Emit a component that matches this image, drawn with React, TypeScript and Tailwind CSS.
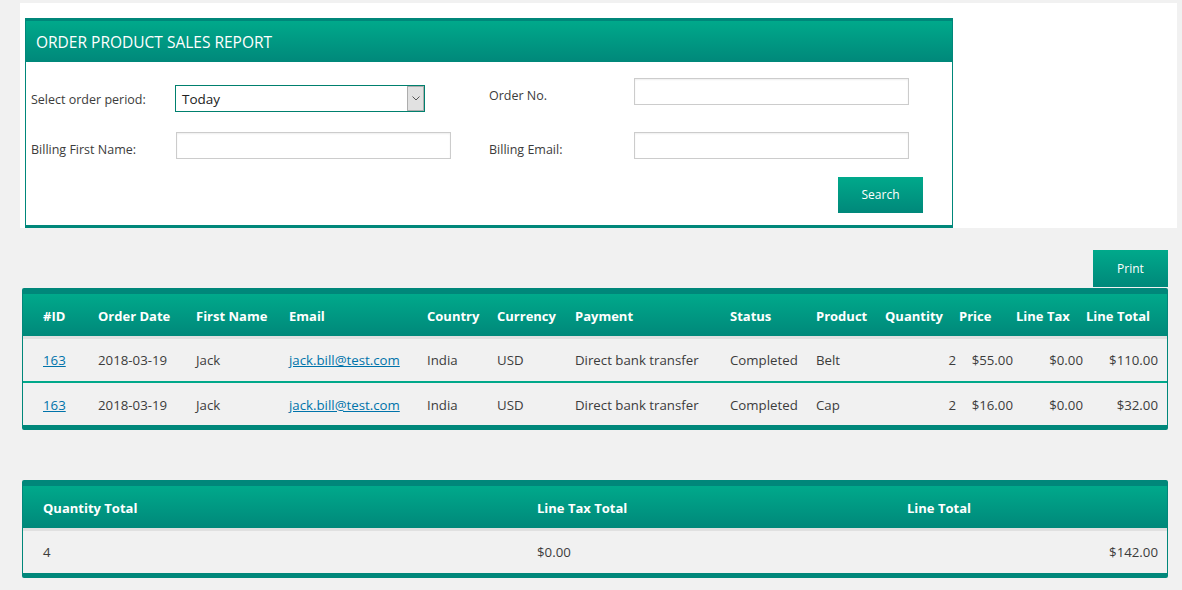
const rows = [
  { id: "163", date: "2018-03-19", name: "Jack", email: "jack.bill@test.com", country: "India", currency: "USD", payment: "Direct bank transfer", status: "Completed", product: "Belt", qty: "2", price: "$55.00", tax: "$0.00", total: "$110.00" },
  { id: "163", date: "2018-03-19", name: "Jack", email: "jack.bill@test.com", country: "India", currency: "USD", payment: "Direct bank transfer", status: "Completed", product: "Cap", qty: "2", price: "$16.00", tax: "$0.00", total: "$32.00" },
];

const cols = [
  { label: "#ID", w: "w-[75px] pl-[20px]" },
  { label: "Order Date", w: "w-[98px]" },
  { label: "First Name", w: "w-[93px]" },
  { label: "Email", w: "w-[138px]" },
  { label: "Country", w: "w-[70px]" },
  { label: "Currency", w: "w-[78px]" },
  { label: "Payment", w: "w-[155px]" },
  { label: "Status", w: "w-[86px]" },
  { label: "Product", w: "w-[69px]" },
  { label: "Quantity", w: "w-[74px]" },
  { label: "Price", w: "w-[57px]" },
  { label: "Line Tax", w: "w-[70px]" },
  { label: "Line Total", w: "w-[81px]" },
];

const headBg = "bg-gradient-to-b from-[#00a98b] to-[#00887a]";

function Input({ w }: { w: string }) {
  return <div className={`${w} h-[27px] border border-[#cccccc] bg-white shadow-[inset_0_1px_2px_rgba(0,0,0,0.07)]`} />;
}

export default function App() {
  return (
    <div className="min-h-screen bg-[#f1f1f1] pt-[3px] text-[#3c3c3c]" style={{ fontFamily: '"Open Sans", "Noto Sans", sans-serif' }}>
      {/* Filter panel */}
      <div className="ml-[20px] w-[1157px] h-[225px] bg-white pt-[15px] pl-[5px]">
        <div className="w-[928px] border-t-[3px] border-b-[3px] border-x-[1.5px] border-[#00877a]">
          <div className={`${headBg} h-[41px] flex items-center pl-[10px] pt-[2px] text-white text-[15.5px]`}>
            ORDER PRODUCT SALES REPORT
          </div>
          <div className="h-[163px] flex text-[12.5px]">
            <div className="w-[463px] pl-[5px] pt-[23px] flex flex-col gap-[20px]">
              <div className="flex items-center h-[27px]">
                <span className="w-[144px] mt-[3px]">Select order period:</span>
                <div className="w-[250px] h-[27px] border border-[#00806e] flex items-center justify-between bg-white">
                  <span className="pl-[6px] pt-[1px] text-[13.5px] text-[#222]">Today</span>
                  <div className="w-[17px] h-[25px] bg-[#e1e1e1] border border-[#adadad] flex items-center justify-center">
                    <svg width="8" height="5" viewBox="0 0 8 5"><path d="M0.5 0.5 L4 4 L7.5 0.5" fill="none" stroke="#555" strokeWidth="1" /></svg>
                  </div>
                </div>
              </div>
              <div className="flex items-center h-[27px]">
                <span className="w-[145px] mt-[9px]">Billing First Name:</span>
                <Input w="w-[275px]" />
              </div>
            </div>
            <div className="pt-[16px] flex flex-col">
              <div className="flex items-center h-[27px]">
                <span className="w-[145px] mt-[9px]">Order No.</span>
                <Input w="w-[275px]" />
              </div>
              <div className="flex items-center h-[27px] mt-[27px]">
                <span className="w-[145px] mt-[9px]">Billing Email:</span>
                <Input w="w-[275px]" />
              </div>
              <div className="flex mt-[18px] pl-[349px]">
                <button className={`${headBg} w-[85px] h-[36px] text-white text-[12px]`}>Search</button>
              </div>
            </div>
          </div>
        </div>
      </div>

      {/* Print */}
      <div className="flex justify-end w-[1168px] mt-[22px]">
        <button className={`${headBg} w-[75px] h-[37px] text-white text-[12px]`}>Print</button>
      </div>

      {/* Orders table */}
      <div className="ml-[22px] w-[1146px] mt-[1px] border-t-[6px] border-b-[5px] border-x border-[#00877a] rounded-[2px]">
        <div className={`${headBg} h-[42px] flex items-center pt-[3px] text-white font-bold text-[13px]`}>
          {cols.map((c) => (
            <div key={c.label} className={`${c.w} shrink-0 whitespace-nowrap`}>{c.label}</div>
          ))}
        </div>
        <div className="h-[3px] bg-[#e0e0e0]" />
        {rows.map((r, i) => (
          <div key={i} className={`flex items-center text-[13.25px] ${i > 0 ? "h-[44px] pt-[3px] border-t-2 border-[#00a88a]" : "h-[42px] pt-[2px]"}`}>
            <div className="w-[75px] pl-[20px] shrink-0"><a href="#" className="text-[#0073aa] underline">{r.id}</a></div>
            <div className="w-[98px] shrink-0">{r.date}</div>
            <div className="w-[93px] shrink-0">{r.name}</div>
            <div className="w-[138px] shrink-0"><a href="#" className="text-[#0073aa] underline">{r.email}</a></div>
            <div className="w-[70px] shrink-0">{r.country}</div>
            <div className="w-[78px] shrink-0">{r.currency}</div>
            <div className="w-[155px] shrink-0 whitespace-nowrap">{r.payment}</div>
            <div className="w-[86px] shrink-0">{r.status}</div>
            <div className="w-[69px] shrink-0">{r.product}</div>
            <div className="w-[74px] shrink-0 text-right pr-[3px]">{r.qty}</div>
            <div className="w-[57px] shrink-0 text-right pr-[3px]">{r.price}</div>
            <div className="w-[70px] shrink-0 text-right pr-[3px]">{r.tax}</div>
            <div className="w-[81px] shrink-0 text-right pr-[9px]">{r.total}</div>
          </div>
        ))}
      </div>

      {/* Totals table */}
      <div className="ml-[22px] w-[1146px] mt-[50px] border-t-[6px] border-b-[5px] border-x border-[#00877a] rounded-[2px]">
        <div className={`${headBg} h-[42px] flex items-center pt-[3px] text-white font-bold text-[13px]`}>
          <div className="w-[514px] pl-[20px] shrink-0">Quantity Total</div>
          <div className="w-[370px] shrink-0">Line Tax Total</div>
          <div className="w-[260px] shrink-0">Line Total</div>
        </div>
        <div className="h-[3px] bg-[#e0e0e0]" />
        <div className="h-[42px] flex items-center pt-[1px] text-[13.25px]">
          <div className="w-[514px] pl-[20px] shrink-0">4</div>
          <div className="w-[370px] shrink-0">$0.00</div>
          <div className="w-[260px] shrink-0 text-right pr-[9px]">$142.00</div>
        </div>
      </div>
    </div>
  );
}
